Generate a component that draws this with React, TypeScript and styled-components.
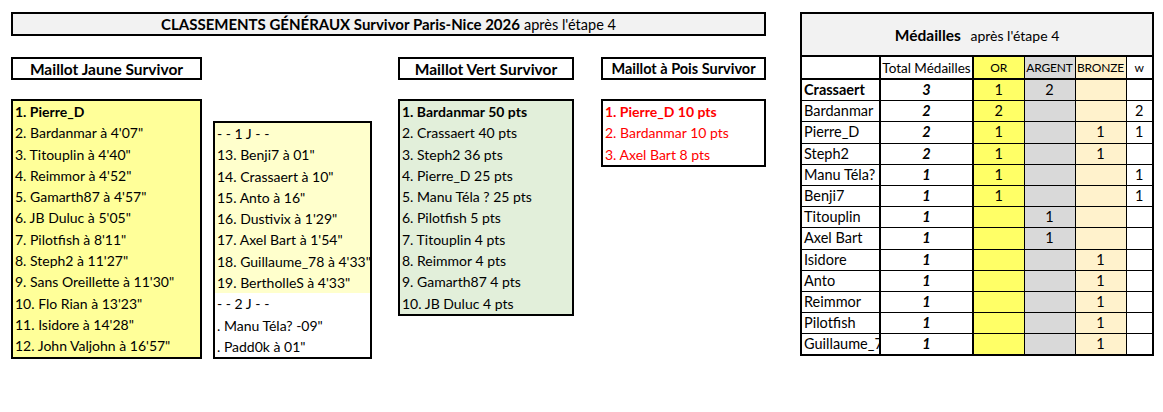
import styled, { createGlobalStyle } from 'styled-components';

const GlobalStyle = createGlobalStyle`
  body {
    margin: 0;
    background: #fff;
    font-family: Lato, 'Noto Sans', sans-serif;
    color: #000;
  }
`;

const Page = styled.div`
  display: flex;
  align-items: flex-start;
  gap: 34px;
  padding: 12px 0 0 11px;
  width: 1163px;
  height: 412px;
  box-sizing: border-box;
`;

const LeftArea = styled.div`
  display: flex;
  flex-direction: column;
  width: 755px;
`;

const TitleBox = styled.div`
  height: 24px;
  border: 2px solid #000;
  background: #f2f2f2;
  box-sizing: border-box;
  display: flex;
  align-items: center;
  justify-content: center;
  font-size: 14.5px;

  b {
    font-size: 15px;
    font-weight: 700;
    margin-right: 4px;
  }
`;

const Columns = styled.div`
  display: flex;
  align-items: flex-start;
  margin-top: 21px;
`;

const Column = styled.div<{ $width: number; $gap?: number; $top?: number }>`
  display: flex;
  flex-direction: column;
  width: ${({ $width }) => $width}px;
  margin-left: ${({ $gap }) => $gap || 0}px;
  padding-top: ${({ $top }) => $top || 0}px;
`;

const HeaderBox = styled.div<{ $size?: number }>`
  height: 23px;
  border: 2px solid #000;
  box-sizing: border-box;
  display: flex;
  align-items: center;
  justify-content: center;
  font-weight: 700;
  font-size: ${({ $size }) => $size || 15.5}px;
`;

const ListBox = styled.div<{ $bg?: string; $top?: number }>`
  margin-top: ${({ $top }) => ($top === undefined ? 19 : $top)}px;
  border: 2px solid #000;
  background: ${({ $bg }) => $bg || '#fff'};
  display: flex;
  flex-direction: column;
`;

const Row = styled.div<{ $bg?: string; $red?: boolean; $bold?: boolean }>`
  height: 21.3px;
  line-height: 21.3px;
  padding-left: 2px;
  font-size: 14px;
  white-space: nowrap;
  background: ${({ $bg }) => $bg || 'transparent'};
  color: ${({ $red }) => ($red ? '#ff0000' : '#000')};
  font-weight: ${({ $bold }) => ($bold ? 700 : 400)};
`;

const Medals = styled.table`
  width: 352px;
  border-collapse: collapse;
  border: 2px solid #000;
  table-layout: fixed;
  font-size: 14px;
`;

const TitleCell = styled.th`
  height: 41px;
  background: #f2f2f2;
  border-bottom: 2px solid #000;
  font-weight: 400;
  font-size: 14px;
  text-align: center;
  padding: 0;

  b {
    font-size: 15.5px;
    font-weight: 700;
    margin-right: 6px;
  }
`;

type Kind = 'name' | 'total' | 'or' | 'argent' | 'bronze' | 'w';

const colBg: Record<Kind, string> = {
  name: '#fff',
  total: '#fff',
  or: '#ffff66',
  argent: '#d9d9d9',
  bronze: '#fff2cc',
  w: '#fff',
};

const HeadCell = styled.td<{ $kind: Kind }>`
  height: 21px;
  padding: 0;
  text-align: center;
  font-size: ${({ $kind }) => ($kind === 'total' ? 13.5 : 12)}px;
  letter-spacing: ${({ $kind }) => ($kind === 'argent' || $kind === 'bronze' ? -0.2 : 0)}px;
  background: ${({ $kind }) => colBg[$kind]};
  border-bottom: 2px solid #000;
  border-right: ${({ $kind }) => ($kind === 'name' || $kind === 'total' ? 2 : 1)}px solid #000;
  white-space: nowrap;
  overflow: hidden;
`;

const Cell = styled.td<{ $kind: Kind; $bold?: boolean }>`
  height: 20.2px;
  padding: 0 0 0 ${({ $kind }) => ($kind === 'name' ? 2 : 0)}px;
  text-align: ${({ $kind }) => ($kind === 'name' ? 'left' : 'center')};
  background: ${({ $kind }) => colBg[$kind]};
  border-top: 1px solid #000;
  border-right: ${({ $kind }) => ($kind === 'name' || $kind === 'total' ? 2 : 1)}px solid #000;
  font-weight: ${({ $kind, $bold }) => ($kind === 'total' || $bold ? 700 : 400)};
  font-style: ${({ $kind }) => ($kind === 'total' ? 'italic' : 'normal')};
  white-space: nowrap;
  overflow: hidden;
  font-size: 14.5px;
  line-height: 20px;
`;

const jaune = [
  "2. Bardanmar à 4'07\"",
  "3. Titouplin à 4'40\"",
  "4. Reimmor à 4'52\"",
  "5. Gamarth87 à 4'57\"",
  "6. JB Duluc à 5'05\"",
  "7. Pilotfish à 8'11\"",
  "8. Steph2 à 11'27\"",
  "9. Sans Oreillette à 11'30\"",
  "10. Flo Rian à 13'23\"",
  "11. Isidore à 14'28\"",
  "12. John Valjohn à 16'57\"",
];

const suite = [
  '- - 1 J - -',
  '13. Benji7 à 01"',
  '14. Crassaert à 10"',
  '15. Anto à 16"',
  "16. Dustivix à 1'29\"",
  "17. Axel Bart à 1'54\"",
  "18. Guillaume_78 à 4'33\"",
  "19. BertholleS à 4'33\"",
];

const suite2 = ['- - 2 J  - -', '. Manu Téla? -09"', '. Padd0k à 01"'];

const vert = [
  '2. Crassaert 40 pts',
  '3. Steph2 36 pts',
  '4. Pierre_D 25 pts',
  '5. Manu Téla ? 25 pts',
  '6. Pilotfish 5 pts',
  '7. Titouplin 4 pts',
  '8. Reimmor 4 pts',
  '9. Gamarth87 4 pts',
  '10. JB Duluc 4 pts',
];

type Medal = [string, number, string, string, string, string];

const medals: Medal[] = [
  ['Crassaert', 3, '1', '2', '', ''],
  ['Bardanmar', 2, '2', '', '', '2'],
  ['Pierre_D', 2, '1', '', '1', '1'],
  ['Steph2', 2, '1', '', '1', ''],
  ['Manu Téla?', 1, '1', '', '', '1'],
  ['Benji7', 1, '1', '', '', '1'],
  ['Titouplin', 1, '', '1', '', ''],
  ['Axel Bart', 1, '', '1', '', ''],
  ['Isidore', 1, '', '', '1', ''],
  ['Anto', 1, '', '', '1', ''],
  ['Reimmor', 1, '', '', '1', ''],
  ['Pilotfish', 1, '', '', '1', ''],
  ['Guillaume_78', 1, '', '', '1', ''],
];

const App = () => {
  return (
    <>
      <GlobalStyle />
      <Page>
        <LeftArea>
          <TitleBox>
            <b>CLASSEMENTS GÉNÉRAUX Survivor Paris-Nice 2026</b> après l'étape 4
          </TitleBox>
          <Columns>
            <Column $width={191}>
              <HeaderBox>Maillot Jaune Survivor</HeaderBox>
              <ListBox $bg="#ffff99">
                <Row $bold>1. Pierre_D</Row>
                {jaune.map((t) => (
                  <Row key={t}>{t}</Row>
                ))}
              </ListBox>
            </Column>
            <Column $width={159} $gap={11} $top={64}>
              <ListBox $top={0}>
                {suite.map((t) => (
                  <Row key={t} $bg="#ffffcc">
                    {t}
                  </Row>
                ))}
                {suite2.map((t) => (
                  <Row key={t}>{t}</Row>
                ))}
              </ListBox>
            </Column>
            <Column $width={176} $gap={26}>
              <HeaderBox>Maillot Vert Survivor</HeaderBox>
              <ListBox $bg="#e2efda">
                <Row $bold>1. Bardanmar 50 pts</Row>
                {vert.map((t) => (
                  <Row key={t}>{t}</Row>
                ))}
              </ListBox>
            </Column>
            <Column $width={165} $gap={27}>
              <HeaderBox $size={14.5}>Maillot à Pois Survivor</HeaderBox>
              <ListBox>
                <Row $red $bold>
                  1. Pierre_D 10 pts
                </Row>
                <Row $red>2. Bardanmar 10 pts</Row>
                <Row $red>3. Axel Bart 8 pts</Row>
              </ListBox>
            </Column>
          </Columns>
        </LeftArea>
        <Medals>
          <colgroup>
            <col style={{ width: 79 }} />
            <col style={{ width: 93 }} />
            <col style={{ width: 51 }} />
            <col style={{ width: 51 }} />
            <col style={{ width: 51 }} />
            <col style={{ width: 27 }} />
          </colgroup>
          <thead>
            <tr>
              <TitleCell colSpan={6}>
                <b>Médailles</b> après l'étape 4
              </TitleCell>
            </tr>
            <tr>
              <HeadCell $kind="name" />
              <HeadCell $kind="total">Total Médailles</HeadCell>
              <HeadCell $kind="or">OR</HeadCell>
              <HeadCell $kind="argent">ARGENT</HeadCell>
              <HeadCell $kind="bronze">BRONZE</HeadCell>
              <HeadCell $kind="w">w</HeadCell>
            </tr>
          </thead>
          <tbody>
            {medals.map(([name, total, or, argent, bronze, w], i) => (
              <tr key={name}>
                <Cell $kind="name" $bold={i === 0}>
                  {name}
                </Cell>
                <Cell $kind="total">{total}</Cell>
                <Cell $kind="or">{or}</Cell>
                <Cell $kind="argent">{argent}</Cell>
                <Cell $kind="bronze">{bronze}</Cell>
                <Cell $kind="w">{w}</Cell>
              </tr>
            ))}
          </tbody>
        </Medals>
      </Page>
    </>
  );
};

export default App;
